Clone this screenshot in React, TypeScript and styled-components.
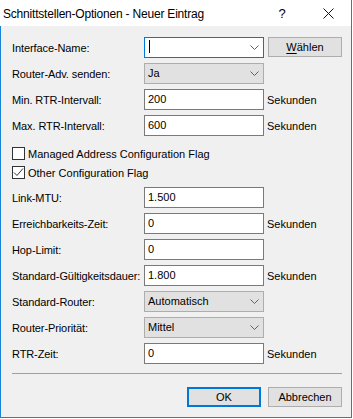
import React from "react";
import styled, { createGlobalStyle } from "styled-components";

const GlobalStyle = createGlobalStyle`
  html, body { margin: 0; padding: 0; background: #ffffff; }
  * { box-sizing: border-box; }
`;

const BLUE = "#1883d7";

const Window = styled.div`
  width: 352px;
  height: 418px;
  display: flex;
  flex-direction: column;
  font-family: "Liberation Sans", Arial, sans-serif;
  font-size: 11px;
  color: #000;
`;

const TitleBar = styled.div`
  height: 26px;
  flex: none;
  background: #ffffff;
  border-right: 1px solid ${BLUE};
  display: flex;
  align-items: center;
`;

const TitleText = styled.div`
  padding-left: 3px;
  font-family: "Liberation Sans", Arial, sans-serif;
  font-size: 12px;
  letter-spacing: -0.2px;
  flex: 1;
  padding-top: 1px;
`;

const CaptionButton = styled.div`
  width: 46px;
  height: 26px;
  display: flex;
  align-items: center;
  justify-content: center;
  font-size: 13px;
`;

const Body = styled.div`
  flex: 1;
  background: #f0f0f0;
  border: 1px solid ${BLUE};
  border-top: none;
  padding: 11px 9px 0 11px;
  display: flex;
  flex-direction: column;
`;

const Form = styled.div`
  display: flex;
  flex-direction: column;
  gap: 5px;
`;

const Row = styled.div`
  display: grid;
  grid-template-columns: 132px 120px auto;
  align-items: center;
  height: 21px;
`;

const Label = styled.div`
  white-space: nowrap;
  letter-spacing: -0.1px;
`;

const Unit = styled.div`
  white-space: nowrap;
  padding-left: 3px;
`;

const Field = styled.div<{ $kind: "input" | "select" | "focus" }>`
  height: 21px;
  width: 120px;
  display: flex;
  align-items: center;
  padding: 0 4px 1px 3px;
  background: ${(p) => (p.$kind === "select" ? "#e1e1e1" : "#ffffff")};
  border: 1px solid
    ${(p) =>
      p.$kind === "select" ? "#adadad" : p.$kind === "focus" ? "#0078d7" : "#7a7a7a"};
`;

const FieldText = styled.span`
  flex: 1;
  white-space: nowrap;
`;

const Caret = styled.span`
  display: inline-block;
  width: 1px;
  height: 13px;
  background: #000;
  margin-left: 1px;
`;

const Chevron = () => (
  <svg width="9" height="5" viewBox="0 0 9 5" style={{ flex: "none" }}>
    <path d="M0.5 0.5 L4.5 4.5 L8.5 0.5" fill="none" stroke="#606060" strokeWidth="1" />
  </svg>
);

const Button = styled.button<{ $default?: boolean }>`
  width: 74px;
  height: 20px;
  padding: 0 0 1px;
  font-family: "Liberation Sans", Arial, sans-serif;
  font-size: 11px;
  color: #000;
  background: #e1e1e1;
  border: ${(p) => (p.$default ? "2px solid #0078d7" : "1px solid #adadad")};
  display: flex;
  align-items: center;
  justify-content: center;
`;

const ChooseButton = styled(Button)`
  align-self: start;
  margin-left: 4px;
  u { text-decoration: underline; text-underline-offset: 2px; }
`;

const CheckGroup = styled.div`
  display: flex;
  flex-direction: column;
  margin-top: 3px;
`;

const CheckRow = styled.label`
  height: 19px;
  display: flex;
  align-items: center;
  gap: 3px;
  white-space: nowrap;
`;

const Box = styled.span`
  width: 13px;
  height: 13px;
  border: 1px solid #333333;
  background: #ffffff;
  display: flex;
  align-items: center;
  justify-content: center;
  flex: none;
`;

const Separator = styled.div`
  height: 1px;
  background: #a0a0a0;
  margin-top: 9px;
`;

const Footer = styled.div`
  display: flex;
  justify-content: flex-end;
  gap: 7px;
  margin-top: 13px;
`;

type RowDef = {
  label: string;
  value: string;
  kind: "input" | "select";
  unit?: string;
};

const topRows: RowDef[] = [
  { label: "Router-Adv. senden:", value: "Ja", kind: "select" },
  { label: "Min. RTR-Intervall:", value: "200", kind: "input", unit: "Sekunden" },
  { label: "Max. RTR-Intervall:", value: "600", kind: "input", unit: "Sekunden" },
];

const bottomRows: RowDef[] = [
  { label: "Link-MTU:", value: "1.500", kind: "input" },
  { label: "Erreichbarkeits-Zeit:", value: "0", kind: "input", unit: "Sekunden" },
  { label: "Hop-Limit:", value: "0", kind: "input" },
  { label: "Standard-Gültigkeitsdauer:", value: "1.800", kind: "input", unit: "Sekunden" },
  { label: "Standard-Router:", value: "Automatisch", kind: "select" },
  { label: "Router-Priorität:", value: "Mittel", kind: "select" },
  { label: "RTR-Zeit:", value: "0", kind: "input", unit: "Sekunden" },
];

const FormRow = ({ r }: { r: RowDef }) => (
  <Row>
    <Label>{r.label}</Label>
    <Field $kind={r.kind}>
      <FieldText>{r.value}</FieldText>
      {r.kind === "select" && <Chevron />}
    </Field>
    {r.unit ? <Unit>{r.unit}</Unit> : <span />}
  </Row>
);

const CheckMark = () => (
  <svg width="11" height="11" viewBox="0 0 11 11">
    <path d="M1 5.5 L4 8.5 L10 1.5" fill="none" stroke="#333" strokeWidth="1" />
  </svg>
);

export default function App() {
  return (
    <>
      <GlobalStyle />
      <Window>
        <TitleBar>
          <TitleText>Schnittstellen-Optionen - Neuer Eintrag</TitleText>
          <CaptionButton>?</CaptionButton>
          <CaptionButton>
            <svg width="11" height="11" viewBox="0 0 11 11">
              <path d="M0.5 0.5 L10.5 10.5 M10.5 0.5 L0.5 10.5" stroke="#111" strokeWidth="1" />
            </svg>
          </CaptionButton>
        </TitleBar>
        <Body>
          <Form>
            <Row>
              <Label>Interface-Name:</Label>
              <Field $kind="focus">
                <FieldText>
                  <Caret />
                </FieldText>
                <Chevron />
              </Field>
              <ChooseButton>
                <span>
                  <u>W</u>ählen
                </span>
              </ChooseButton>
            </Row>
            {topRows.map((r) => (
              <FormRow key={r.label} r={r} />
            ))}
            <CheckGroup>
              <CheckRow>
                <Box />
                Managed Address Configuration Flag
              </CheckRow>
              <CheckRow>
                <Box>
                  <CheckMark />
                </Box>
                Other Configuration Flag
              </CheckRow>
            </CheckGroup>
            {bottomRows.map((r) => (
              <FormRow key={r.label} r={r} />
            ))}
          </Form>
          <Separator />
          <Footer>
            <Button $default>OK</Button>
            <Button>Abbrechen</Button>
          </Footer>
        </Body>
      </Window>
    </>
  );
}
